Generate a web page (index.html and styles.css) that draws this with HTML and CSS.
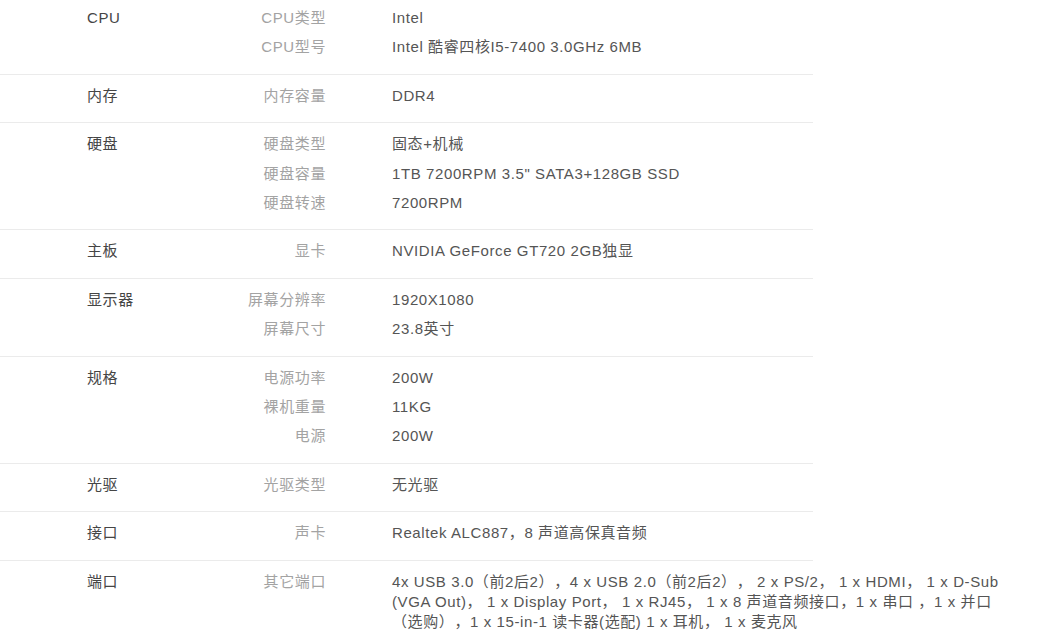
FILE: index.html
```html
<!DOCTYPE html>
<html lang="zh-CN">
<head>
<meta charset="utf-8">
<title>参数</title>
<link rel="stylesheet" href="styles.css">
</head>
<body>
<div class="specs">
  <div class="row first">
    <div class="cat">CPU</div>
    <dl class="items">
      <div class="item"><dt>CPU类型</dt><dd>Intel</dd></div>
      <div class="item"><dt>CPU型号</dt><dd>Intel 酷睿四核I5-7400 3.0GHz 6MB</dd></div>
    </dl>
  </div>
  <div class="row">
    <div class="cat">内存</div>
    <dl class="items">
      <div class="item"><dt>内存容量</dt><dd>DDR4</dd></div>
    </dl>
  </div>
  <div class="row">
    <div class="cat">硬盘</div>
    <dl class="items">
      <div class="item"><dt>硬盘类型</dt><dd>固态+机械</dd></div>
      <div class="item"><dt>硬盘容量</dt><dd>1TB 7200RPM 3.5" SATA3+128GB SSD</dd></div>
      <div class="item"><dt>硬盘转速</dt><dd>7200RPM</dd></div>
    </dl>
  </div>
  <div class="row">
    <div class="cat">主板</div>
    <dl class="items">
      <div class="item"><dt>显卡</dt><dd>NVIDIA GeForce GT720 2GB独显</dd></div>
    </dl>
  </div>
  <div class="row">
    <div class="cat">显示器</div>
    <dl class="items">
      <div class="item"><dt>屏幕分辨率</dt><dd>1920X1080</dd></div>
      <div class="item"><dt>屏幕尺寸</dt><dd>23.8英寸</dd></div>
    </dl>
  </div>
  <div class="row">
    <div class="cat">规格</div>
    <dl class="items">
      <div class="item"><dt>电源功率</dt><dd>200W</dd></div>
      <div class="item"><dt>裸机重量</dt><dd>11KG</dd></div>
      <div class="item"><dt>电源</dt><dd>200W</dd></div>
    </dl>
  </div>
  <div class="row">
    <div class="cat">光驱</div>
    <dl class="items">
      <div class="item"><dt>光驱类型</dt><dd>无光驱</dd></div>
    </dl>
  </div>
  <div class="row">
    <div class="cat">接口</div>
    <dl class="items">
      <div class="item"><dt>声卡</dt><dd>Realtek ALC887，8 声道高保真音频</dd></div>
    </dl>
  </div>
  <div class="row">
    <div class="cat">端口</div>
    <dl class="items">
      <div class="item"><dt>其它端口</dt><dd>4x USB 3.0（前2后2），4 x USB 2.0（前2后2）， 2 x PS/2， 1 x HDMI， 1 x D-Sub (VGA Out)， 1 x Display Port， 1 x RJ45， 1 x 8 声道音频接口，1 x 串口 ，1 x 并口（选购），1 x 15-in-1 读卡器(选配) 1 x 耳机， 1 x 麦克风</dd></div>
    </dl>
  </div>
</div>
</body>
</html>
```

FILE: styles.css
```css
html, body {
  margin: 0;
  padding: 0;
  background: #ffffff;
}

body {
  font-family: "Liberation Sans", Arial, "Noto Sans CJK SC", sans-serif;
  font-size: 15px;
  letter-spacing: 0.6px;
  line-height: 20px;
  color: #555555;
  text-spacing-trim: space-all;
}

.specs {
  width: 813px;
}

.row {
  display: flex;
  border-top: 1px solid #ebebeb;
  padding: 11px 0 7.4px 87px;
}

.row.first {
  border-top: none;
  padding-top: 8px;
}

.cat {
  width: 150px;
  flex: none;
  color: #454545;
}

.items {
  margin: 0;
  display: flex;
  flex-direction: column;
}

.item {
  display: flex;
  margin-bottom: 9.2px;
}

.item dt {
  width: 89px;
  flex: none;
  text-align: right;
  color: #a3a3a3;
}

.item dd {
  margin: 0 0 0 66px;
  width: 625px;
  flex: none;
  color: #555555;
}
```
